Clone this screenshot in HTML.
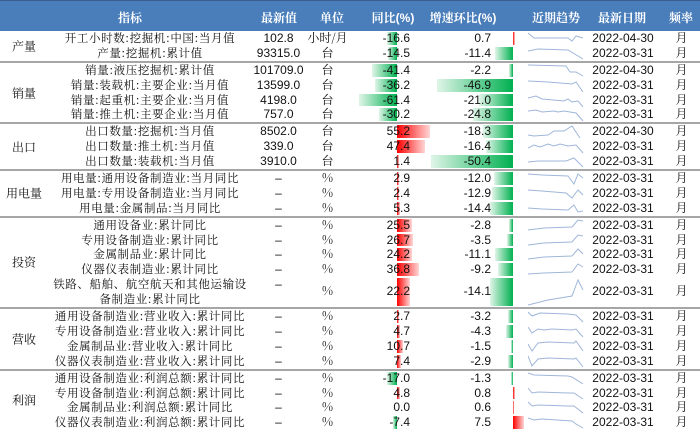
<!DOCTYPE html>
<html><head><meta charset="utf-8"><style>
*{margin:0;padding:0;box-sizing:border-box}
body{width:700px;height:431px;overflow:hidden;background:#fff;font-family:"Liberation Sans","Noto Serif CJK SC","Noto Sans CJK SC",sans-serif;font-size:12px;color:#111}
.hd{position:relative;height:31px;background:#4a7ebb;color:#fff;font-weight:bold;font-size:12px;border-top:1px solid #3a5f8f}
.hd span{position:absolute;top:8px;transform:translateX(-50%);white-space:nowrap}
.g{position:relative;border-top:2px solid #a6a6a6}
.gl{position:absolute;left:0;width:48px;top:50%;transform:translateY(-50%);text-align:center;font-family:"Noto Serif CJK SC",serif}
.r{position:relative;height:14.9px;line-height:14.9px;white-space:nowrap}
.r.d{height:29.8px}
.i{position:absolute;left:48px;width:204px;text-align:center;font-family:"Noto Serif CJK SC",serif;font-size:11.5px;letter-spacing:.6px}
.v{position:absolute;left:252px;width:53px;text-align:center}
.u{position:absolute;left:305px;width:45px;text-align:center;font-family:"Noto Serif CJK SC",serif}
.yb,.cb{position:absolute;top:1px;height:12.9px}
.yt{position:absolute;right:290px}
.ct{position:absolute;right:209px}
.sp{position:absolute;left:528px;top:1px}
.dt{position:absolute;left:588px;width:70px;text-align:center}
.fq{position:absolute;left:663px;width:37px;text-align:center;font-family:"Noto Serif CJK SC",serif}
.red{background:linear-gradient(to right,#ff0000,#ffd6d6)}
.grn{background:linear-gradient(to left,#00b050,#e0f5e8)}
.d .yb,.d .cb{height:27.8px}
.d .yt,.d .ct,.d .dt,.d .fq,.d .u{top:7px}
.d .i{line-height:14.9px}
</style></head><body>
<div class="hd">
<span style="left:130px">指标</span><span style="left:279px">最新值</span><span style="left:332px">单位</span><span style="left:393px">同比(%)</span><span style="left:463px">增速环比(%)</span><span style="left:556px">近期趋势</span><span style="left:622px">最新日期</span><span style="left:681px">频率</span>
</div>

<div class="g" style="border-top:none">
<div class="gl">产量</div>
<div class="r"><span class="i">开工小时数:挖掘机:中国:当月值</span><span class="v">102.8</span><span class="u">小时/月</span><div class="yb grn" style="left:387px;width:10px"></div><span class="yt">-16.6</span><div class="cb red" style="left:513px;width:2px"></div><span class="ct">0.7</span><svg class="sp" width="56" height="13"><polyline fill="none" stroke="#9fb6d9" points="0,1 6,6 40,6 44,9 48,4 55,6"/></svg><span class="dt">2022-04-30</span><span class="fq">月</span></div>
<div class="r"><span class="i">产量:挖掘机:累计值</span><span class="v">93315.0</span><span class="u">台</span><div class="yb grn" style="left:388px;width:9px"></div><span class="yt">-14.5</span><div class="cb grn" style="left:495px;width:18px"></div><span class="ct">-11.4</span><svg class="sp" width="56" height="13"><polyline fill="none" stroke="#9fb6d9" points="0,4 10,2 40,3 55,12"/></svg><span class="dt">2022-03-31</span><span class="fq">月</span></div>
</div>

<div class="g">
<div class="gl">销量</div>
<div class="r"><span class="i">销量:液压挖掘机:累计值</span><span class="v">101709.0</span><span class="u">台</span><div class="yb grn" style="left:372px;width:25px"></div><span class="yt">-41.4</span><div class="cb grn" style="left:509px;width:4px"></div><span class="ct">-2.2</span><svg class="sp" width="56" height="13"><polyline fill="none" stroke="#9fb6d9" points="0,1 38,2 42,8 48,8 55,12"/></svg><span class="dt">2022-04-30</span><span class="fq">月</span></div>
<div class="r"><span class="i">销量:装载机:主要企业:当月值</span><span class="v">13599.0</span><span class="u">台</span><div class="yb grn" style="left:375px;width:22px"></div><span class="yt">-36.2</span><div class="cb grn" style="left:437px;width:76px"></div><span class="ct">-46.9</span><svg class="sp" width="56" height="13"><polyline fill="none" stroke="#9fb6d9" points="0,2 20,3 44,5 48,3 55,13"/></svg><span class="dt">2022-03-31</span><span class="fq">月</span></div>
<div class="r"><span class="i">销量:起重机:主要企业:当月值</span><span class="v">4198.0</span><span class="u">台</span><div class="yb grn" style="left:359px;width:38px"></div><span class="yt">-61.4</span><div class="cb grn" style="left:479px;width:34px"></div><span class="ct">-21.0</span><svg class="sp" width="56" height="13"><polyline fill="none" stroke="#9fb6d9" points="0,4 8,2 14,5 36,7 40,5 44,8 50,7 55,13"/></svg><span class="dt">2022-03-31</span><span class="fq">月</span></div>
<div class="r"><span class="i">销量:推土机:主要企业:当月值</span><span class="v">757.0</span><span class="u">台</span><div class="yb grn" style="left:379px;width:18px"></div><span class="yt">-30.2</span><div class="cb grn" style="left:473px;width:40px"></div><span class="ct">-24.8</span><svg class="sp" width="56" height="13"><polyline fill="none" stroke="#9fb6d9" points="0,3 8,2 14,4 26,3 30,4 36,3 48,5 55,13"/></svg><span class="dt">2022-03-31</span><span class="fq">月</span></div>
</div>

<div class="g">
<div class="gl">出口</div>
<div class="r"><span class="i">出口数量:挖掘机:当月值</span><span class="v">8502.0</span><span class="u">台</span><div class="yb red" style="left:397px;width:33px"></div><span class="yt">55.2</span><div class="cb grn" style="left:483px;width:30px"></div><span class="ct">-18.3</span><svg class="sp" width="56" height="13"><polyline fill="none" stroke="#9fb6d9" points="0,10 6,11 20,10 26,6 36,6 44,1 52,13"/></svg><span class="dt">2022-04-30</span><span class="fq">月</span></div>
<div class="r"><span class="i">出口数量:推土机:当月值</span><span class="v">339.0</span><span class="u">台</span><div class="yb red" style="left:397px;width:28px"></div><span class="yt">47.4</span><div class="cb grn" style="left:486px;width:27px"></div><span class="ct">-16.4</span><svg class="sp" width="56" height="13"><polyline fill="none" stroke="#9fb6d9" points="0,8 6,5 12,7 20,4 26,6 32,4 40,6 48,5 55,13"/></svg><span class="dt">2022-03-31</span><span class="fq">月</span></div>
<div class="r"><span class="i">出口数量:装载机:当月值</span><span class="v">3910.0</span><span class="u">台</span><div class="yb red" style="left:397px;width:2px"></div><span class="yt">1.4</span><div class="cb grn" style="left:431px;width:82px"></div><span class="ct">-50.4</span><svg class="sp" width="56" height="13"><polyline fill="none" stroke="#9fb6d9" points="0,7 10,6 38,6 46,3 55,12"/></svg><span class="dt">2022-03-31</span><span class="fq">月</span></div>
</div>

<div class="g">
<div class="gl">用电量</div>
<div class="r"><span class="i">用电量:通用设备制造业:当月同比</span><span class="v">–</span><span class="u">%</span><div class="yb red" style="left:397px;width:2px"></div><span class="yt">2.9</span><div class="cb grn" style="left:494px;width:19px"></div><span class="ct">-12.0</span><svg class="sp" width="56" height="13"><polyline fill="none" stroke="#9fb6d9" points="0,2 14,3 40,4 46,12 50,2 55,6"/></svg><span class="dt">2022-03-31</span><span class="fq">月</span></div>
<div class="r"><span class="i">用电量:专用设备制造业:当月同比</span><span class="v">–</span><span class="u">%</span><div class="yb red" style="left:397px;width:2px"></div><span class="yt">2.4</span><div class="cb grn" style="left:492px;width:21px"></div><span class="ct">-12.9</span><svg class="sp" width="56" height="13"><polyline fill="none" stroke="#9fb6d9" points="0,3 14,4 38,6 44,11 50,3 55,8"/></svg><span class="dt">2022-03-31</span><span class="fq">月</span></div>
<div class="r"><span class="i">用电量:金属制品:当月同比</span><span class="v">–</span><span class="u">%</span><div class="yb red" style="left:397px;width:3px"></div><span class="yt">5.3</span><div class="cb grn" style="left:490px;width:23px"></div><span class="ct">-14.4</span><svg class="sp" width="56" height="13"><polyline fill="none" stroke="#9fb6d9" points="0,6 14,7 40,8 46,3 50,10 55,9"/></svg><span class="dt">2022-03-31</span><span class="fq">月</span></div>
</div>

<div class="g">
<div class="gl">投资</div>
<div class="r"><span class="i">通用设备业:累计同比</span><span class="v">–</span><span class="u">%</span><div class="yb red" style="left:397px;width:15px"></div><span class="yt">25.5</span><div class="cb grn" style="left:509px;width:4px"></div><span class="ct">-2.8</span><svg class="sp" width="56" height="13"><polyline fill="none" stroke="#9fb6d9" points="0,11 16,9 44,8 50,1 55,2"/></svg><span class="dt">2022-03-31</span><span class="fq">月</span></div>
<div class="r"><span class="i">专用设备制造业:累计同比</span><span class="v">–</span><span class="u">%</span><div class="yb red" style="left:397px;width:16px"></div><span class="yt">26.7</span><div class="cb grn" style="left:507px;width:6px"></div><span class="ct">-3.5</span><svg class="sp" width="56" height="13"><polyline fill="none" stroke="#9fb6d9" points="0,11 16,9 44,8 50,1 55,2"/></svg><span class="dt">2022-03-31</span><span class="fq">月</span></div>
<div class="r"><span class="i">金属制品业:累计同比</span><span class="v">–</span><span class="u">%</span><div class="yb red" style="left:397px;width:15px"></div><span class="yt">24.2</span><div class="cb grn" style="left:495px;width:18px"></div><span class="ct">-11.1</span><svg class="sp" width="56" height="13"><polyline fill="none" stroke="#9fb6d9" points="0,11 16,9 44,8 50,1 55,6"/></svg><span class="dt">2022-03-31</span><span class="fq">月</span></div>
<div class="r"><span class="i">仪器仪表制造业:累计同比</span><span class="v">–</span><span class="u">%</span><div class="yb red" style="left:397px;width:22px"></div><span class="yt">36.8</span><div class="cb grn" style="left:498px;width:15px"></div><span class="ct">-9.2</span><svg class="sp" width="56" height="13"><polyline fill="none" stroke="#9fb6d9" points="0,11 16,10 44,9 50,1 55,4"/></svg><span class="dt">2022-03-31</span><span class="fq">月</span></div>
<div class="r d"><span class="i" style="top:0">铁路、船舶、航空航天和其他运输设<br>备制造业:累计同比</span><span class="v" style="top:0">–</span><span class="u">%</span><div class="yb red" style="left:397px;width:13px"></div><span class="yt" style="top:7px">22.2</span><div class="cb grn" style="left:490px;width:23px"></div><span class="ct">-14.1</span><svg class="sp" width="56" height="28"><polyline fill="none" stroke="#9fb6d9" points="0,27 20,22 44,18 50,2 55,12"/></svg><span class="dt">2022-03-31</span><span class="fq">月</span></div>
</div>

<div class="g">
<div class="gl">营收</div>
<div class="r"><span class="i">通用设备制造业:营业收入:累计同比</span><span class="v">–</span><span class="u">%</span><div class="yb red" style="left:397px;width:2px"></div><span class="yt">2.7</span><div class="cb grn" style="left:508px;width:5px"></div><span class="ct">-3.2</span><svg class="sp" width="56" height="13"><polyline fill="none" stroke="#9fb6d9" points="0,2 4,6 12,3 40,4 48,5 55,12"/></svg><span class="dt">2022-03-31</span><span class="fq">月</span></div>
<div class="r"><span class="i">专用设备制造业:营业收入:累计同比</span><span class="v">–</span><span class="u">%</span><div class="yb red" style="left:397px;width:3px"></div><span class="yt">4.7</span><div class="cb grn" style="left:506px;width:7px"></div><span class="ct">-4.3</span><svg class="sp" width="56" height="13"><polyline fill="none" stroke="#9fb6d9" points="0,2 4,8 10,4 16,5 24,4 44,5 48,4 55,12"/></svg><span class="dt">2022-03-31</span><span class="fq">月</span></div>
<div class="r"><span class="i">金属制品业:营业收入:累计同比</span><span class="v">–</span><span class="u">%</span><div class="yb red" style="left:397px;width:6px"></div><span class="yt">10.7</span><div class="cb grn" style="left:511px;width:2px"></div><span class="ct">-1.5</span><svg class="sp" width="56" height="13"><polyline fill="none" stroke="#9fb6d9" points="0,4 4,11 10,3 20,2 46,3 48,1 55,11"/></svg><span class="dt">2022-03-31</span><span class="fq">月</span></div>
<div class="r"><span class="i">仪器仪表制造业:营业收入:累计同比</span><span class="v">–</span><span class="u">%</span><div class="yb red" style="left:397px;width:4px"></div><span class="yt">7.4</span><div class="cb grn" style="left:508px;width:5px"></div><span class="ct">-2.9</span><svg class="sp" width="56" height="13"><polyline fill="none" stroke="#9fb6d9" points="0,1 4,11 10,4 20,3 46,4 48,3 55,12"/></svg><span class="dt">2022-03-31</span><span class="fq">月</span></div>
</div>

<div class="g">
<div class="gl">利润</div>
<div class="r"><span class="i">通用设备制造业:利润总额:累计同比</span><span class="v">–</span><span class="u">%</span><div class="yb grn" style="left:387px;width:10px"></div><span class="yt">-17.0</span><div class="cb grn" style="left:511px;width:2px"></div><span class="ct">-1.3</span><svg class="sp" width="56" height="13"><polyline fill="none" stroke="#9fb6d9" points="0,1 6,3 40,4 44,5 55,12"/></svg><span class="dt">2022-03-31</span><span class="fq">月</span></div>
<div class="r"><span class="i">专用设备制造业:利润总额:累计同比</span><span class="v">–</span><span class="u">%</span><div class="yb red" style="left:397px;width:3px"></div><span class="yt">4.8</span><div class="cb red" style="left:513px;width:2px"></div><span class="ct">0.8</span><svg class="sp" width="56" height="13"><polyline fill="none" stroke="#9fb6d9" points="0,1 4,6 10,5 40,6 46,6 55,12"/></svg><span class="dt">2022-03-31</span><span class="fq">月</span></div>
<div class="r"><span class="i">金属制品业:利润总额:累计同比</span><span class="v">–</span><span class="u">%</span><span class="yt">0.0</span><div class="cb red" style="left:513px;width:1px"></div><span class="ct">0.6</span><svg class="sp" width="56" height="13"><polyline fill="none" stroke="#9fb6d9" points="0,1 4,5 10,4 40,5 46,5 55,12"/></svg><span class="dt">2022-03-31</span><span class="fq">月</span></div>
<div class="r"><span class="i">仪器仪表制造业:利润总额:累计同比</span><span class="v">–</span><span class="u">%</span><div class="yb grn" style="left:393px;width:4px"></div><span class="yt">-7.4</span><div class="cb red" style="left:513px;width:11px"></div><span class="ct">7.5</span><svg class="sp" width="56" height="13"><polyline fill="none" stroke="#9fb6d9" points="0,2 6,4 14,3 44,5 48,8 55,12"/></svg><span class="dt">2022-03-31</span><span class="fq">月</span></div>
</div>
</body></html>
